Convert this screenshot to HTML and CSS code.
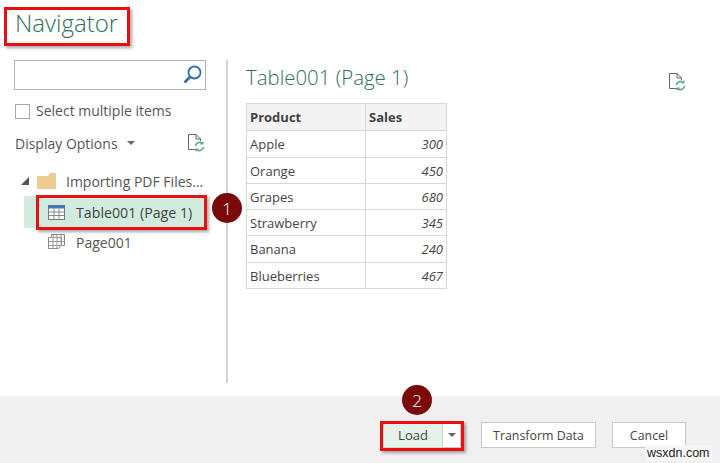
FILE: index.html
```html
<!DOCTYPE html>
<html lang="en">
<head>
<meta charset="utf-8">
<title>Navigator</title>
<link rel="stylesheet" href="styles.css">
</head>
<body>
<div class="app">
  <main class="main">
    <h1 class="title">Navigator</h1>
    <div class="panes">
      <aside class="left">
        <div class="search">
          <svg class="search-icon" width="22" height="22" viewBox="0 0 22 22"><circle cx="12.5" cy="8.5" r="6" fill="none" stroke="#2f6ea8" stroke-width="1.8"/><path d="M8 13 L2.5 18.5" stroke="#2f6ea8" stroke-width="2.6" fill="none"/></svg>
        </div>
        <label class="check"><span class="box"></span>Select multiple items</label>
        <div class="options">
          <span class="options-label">Display Options</span>
          <span class="caret"></span>
          <svg class="refresh" width="20" height="20" viewBox="0 0 20 20"><path d="M12 16.5H2.5V1.5H10L14.5 6V8M10 1.5V6H14.5" fill="none" stroke="#666" stroke-width="1"/><path d="M9.5 13a4 4 0 0 1 6.6-2.6M17.5 14a4 4 0 0 1-6.6 2.6" fill="none" stroke="#5fa98c" stroke-width="1.7"/><path d="M17.5 8v3.6h-3.6zM9.5 19v-3.6h3.6z" fill="#5fa98c"/></svg>
        </div>
        <ul class="tree">
          <li class="node folder-node">
            <span class="expander"></span>
            <svg class="folder" width="19" height="16" viewBox="0 0 19 16"><path d="M0 3h11l2-3h5a1 1 0 0 1 1 1v15H0z" fill="#eccb8e"/></svg>
            <span>Importing PDF Files...</span>
          </li>
          <li class="node leaf selected">
            <svg class="leaf-icon" width="17" height="15" viewBox="0 0 17 15"><rect x=".5" y=".5" width="16" height="14" fill="#fff" stroke="#777"/><rect width="17" height="3.5" fill="#4a76b0"/><path d="M.5 7h16M.5 10.5h16M6 3.5v11M11 3.5v11" stroke="#888" stroke-width="1" fill="none"/></svg>
            <span>Table001 (Page 1)</span>
          </li>
          <li class="node leaf page-node">
            <svg class="leaf-icon" width="17" height="16" viewBox="0 0 17 16"><path d="M3.5.5h13v11h-3M3.5.5v2M.5 3.5v11h10l2-3" fill="none" stroke="#888"/><path d="M.5 3.5h13v8M.5 7.5h16M.5 11.5h12M5 .5v14M9 .5v14M13 .5v11" fill="none" stroke="#999" stroke-width="1"/></svg>
            <span>Page001</span>
          </li>
        </ul>
      </aside>
      <div class="divider"></div>
      <section class="right">
        <div class="preview">
          <h2 class="table-title">Table001 (Page 1)</h2>
          <table class="data">
            <thead><tr><th>Product</th><th>Sales</th></tr></thead>
            <tbody>
              <tr class="tall"><td>Apple</td><td class="num">300</td></tr>
              <tr><td>Orange</td><td class="num">450</td></tr>
              <tr><td>Grapes</td><td class="num">680</td></tr>
              <tr><td>Strawberry</td><td class="num">345</td></tr>
              <tr class="tall"><td>Banana</td><td class="num">240</td></tr>
              <tr><td>Blueberries</td><td class="num">467</td></tr>
            </tbody>
          </table>
        </div>
        <svg class="refresh preview-refresh" width="20" height="20" viewBox="0 0 20 20"><path d="M12 16.5H2.5V1.5H10L14.5 6V8M10 1.5V6H14.5" fill="none" stroke="#666" stroke-width="1"/><path d="M9.5 13a4 4 0 0 1 6.6-2.6M17.5 14a4 4 0 0 1-6.6 2.6" fill="none" stroke="#5fa98c" stroke-width="1.7"/><path d="M17.5 8v3.6h-3.6zM9.5 19v-3.6h3.6z" fill="#5fa98c"/></svg>
      </section>
    </div>
  </main>
  <footer class="footer">
    <div class="split">
      <button class="btn load">Load</button>
      <button class="btn drop"><span class="caret"></span></button>
    </div>
    <button class="btn transform">Transform Data</button>
    <button class="btn cancel">Cancel</button>
  </footer>
  <div class="mark mark-title"></div>
  <div class="mark mark-row"></div>
  <div class="mark mark-load"></div>
  <div class="badge badge-one">1</div>
  <div class="badge badge-two">2</div>
  <div class="watermark">wsxdn.com</div>
</div>
</body>
</html>
```

FILE: styles.css
```css
* { box-sizing: border-box; }
html, body { margin: 0; padding: 0; }
body { width: 720px; height: 463px; overflow: hidden; background: #fff; font-family: "Open Sans", "Noto Sans", sans-serif; color: #444; }
.app { position: relative; width: 720px; height: 463px; display: flex; flex-direction: column; }
.main { height: 396px; display: flex; flex-direction: column; }
.title { margin: 0; padding: 6px 0 0 15px; height: 60px; font-size: 24px; line-height: 34px; font-weight: 300; color: #2f6f5a; }
.panes { display: flex; flex: 1; padding-bottom: 13px; }
.left { width: 226px; padding-left: 14px; }
.search { width: 192px; height: 30px; border: 1px solid #b5b5b5; display: flex; justify-content: flex-end; align-items: center; padding-right: 1px; }
.check { display: flex; align-items: center; margin-top: 11px; margin-left: 1px; font-size: 14px; line-height: 20px; color: #555; }
.box { width: 15px; height: 15px; border: 1px solid #a8a8a8; margin-right: 6px; }
.options { display: flex; align-items: center; margin-top: 11px; margin-left: 1px; height: 22px; font-size: 14px; color: #555; }
.options-label { width: 112px; }
.caret { display: inline-block; width: 0; height: 0; border-left: 4px solid transparent; border-right: 4px solid transparent; border-top: 4px solid #666; }
.options .refresh { margin-left: 51px; }
.tree { list-style: none; margin: 14px 0 0; padding: 0; font-size: 14px; color: #555; }
.node { display: flex; align-items: center; height: 32px; }
.folder-node { height: 28px; padding-left: 7px; padding-bottom: 2px; }
.expander { width: 0; height: 0; border-style: solid; border-width: 0 0 8px 8px; border-color: transparent transparent #555 transparent; margin-right: 8px; }
.folder { margin-right: 10px; }
.leaf { padding-left: 34px; gap: 11px; width: 191px; margin-left: 0; }
.leaf-icon { flex: none; }
.page-node { height: 28px; }
.selected { background: #d2ebdf; margin-left: 10px; padding-left: 24px; width: 181px; color: #444; font-size: 14.2px; }
.divider { width: 2px; background: #d2d2d2; }
.right { flex: 1; display: flex; justify-content: space-between; padding-left: 18px; padding-right: 33px; }
.table-title { margin: 0; height: 43px; padding-top: 1px; font-size: 20.4px; line-height: 32px; font-weight: 300; color: #2f6f5a; }
.data { border-collapse: collapse; width: 201px; table-layout: fixed; font-size: 13px; color: #444; }
.data th, .data td { border: 1px solid #d8d8d8; height: 26px; padding: 0 3px; text-align: left; }
.data th { background: #f3f3f3; font-weight: 700; height: 27px; }
.data .tall td { height: 27px; }
.data th:first-child, .data td:first-child { width: 119px; }
.data .num { text-align: right; font-style: italic; }
.preview-refresh { margin-top: 12px; }
.footer { flex: 1; background: #f0f0f0; display: flex; align-items: flex-start; padding: 26px 34px 0 383px; font-size: 12.4px; }
.btn { font: inherit; color: #444; background: #fff; border: 1px solid #c8c8c8; height: 26px; padding: 0; }
.split { display: flex; width: 78px; }
.load { width: 60px; background: #e4f2ea; border-color: #c5dccf; font-size: 13px; }
.drop { width: 18px; border-left: 0; display: flex; align-items: center; justify-content: center; }
.transform { width: 115px; margin-left: 20px; }
.cancel { width: 74px; margin-left: 16px; }
.mark { position: absolute; border: 3px solid #e60f14; box-shadow: 2px 2px 3px rgba(0,0,0,.35); }
.mark-title { left: 4px; top: 7px; width: 126px; height: 39px; }
.mark-row { left: 36px; top: 195px; width: 171px; height: 35px; }
.mark-load { left: 380px; top: 421px; width: 84px; height: 30px; }
.badge { position: absolute; width: 30px; height: 30px; border-radius: 50%; background: #7a0a0a; color: #fff; font-size: 17px; font-weight: 300; display: flex; align-items: center; justify-content: center; }
.badge-one { left: 212px; top: 193px; }
.badge-two { left: 402px; top: 385px; }
.watermark { position: absolute; left: 645px; top: 445px; font-family: "Liberation Sans", sans-serif; font-size: 12.5px; line-height: 16px; color: #222; background: #f6f6f6; padding: 0 2px; }
```
